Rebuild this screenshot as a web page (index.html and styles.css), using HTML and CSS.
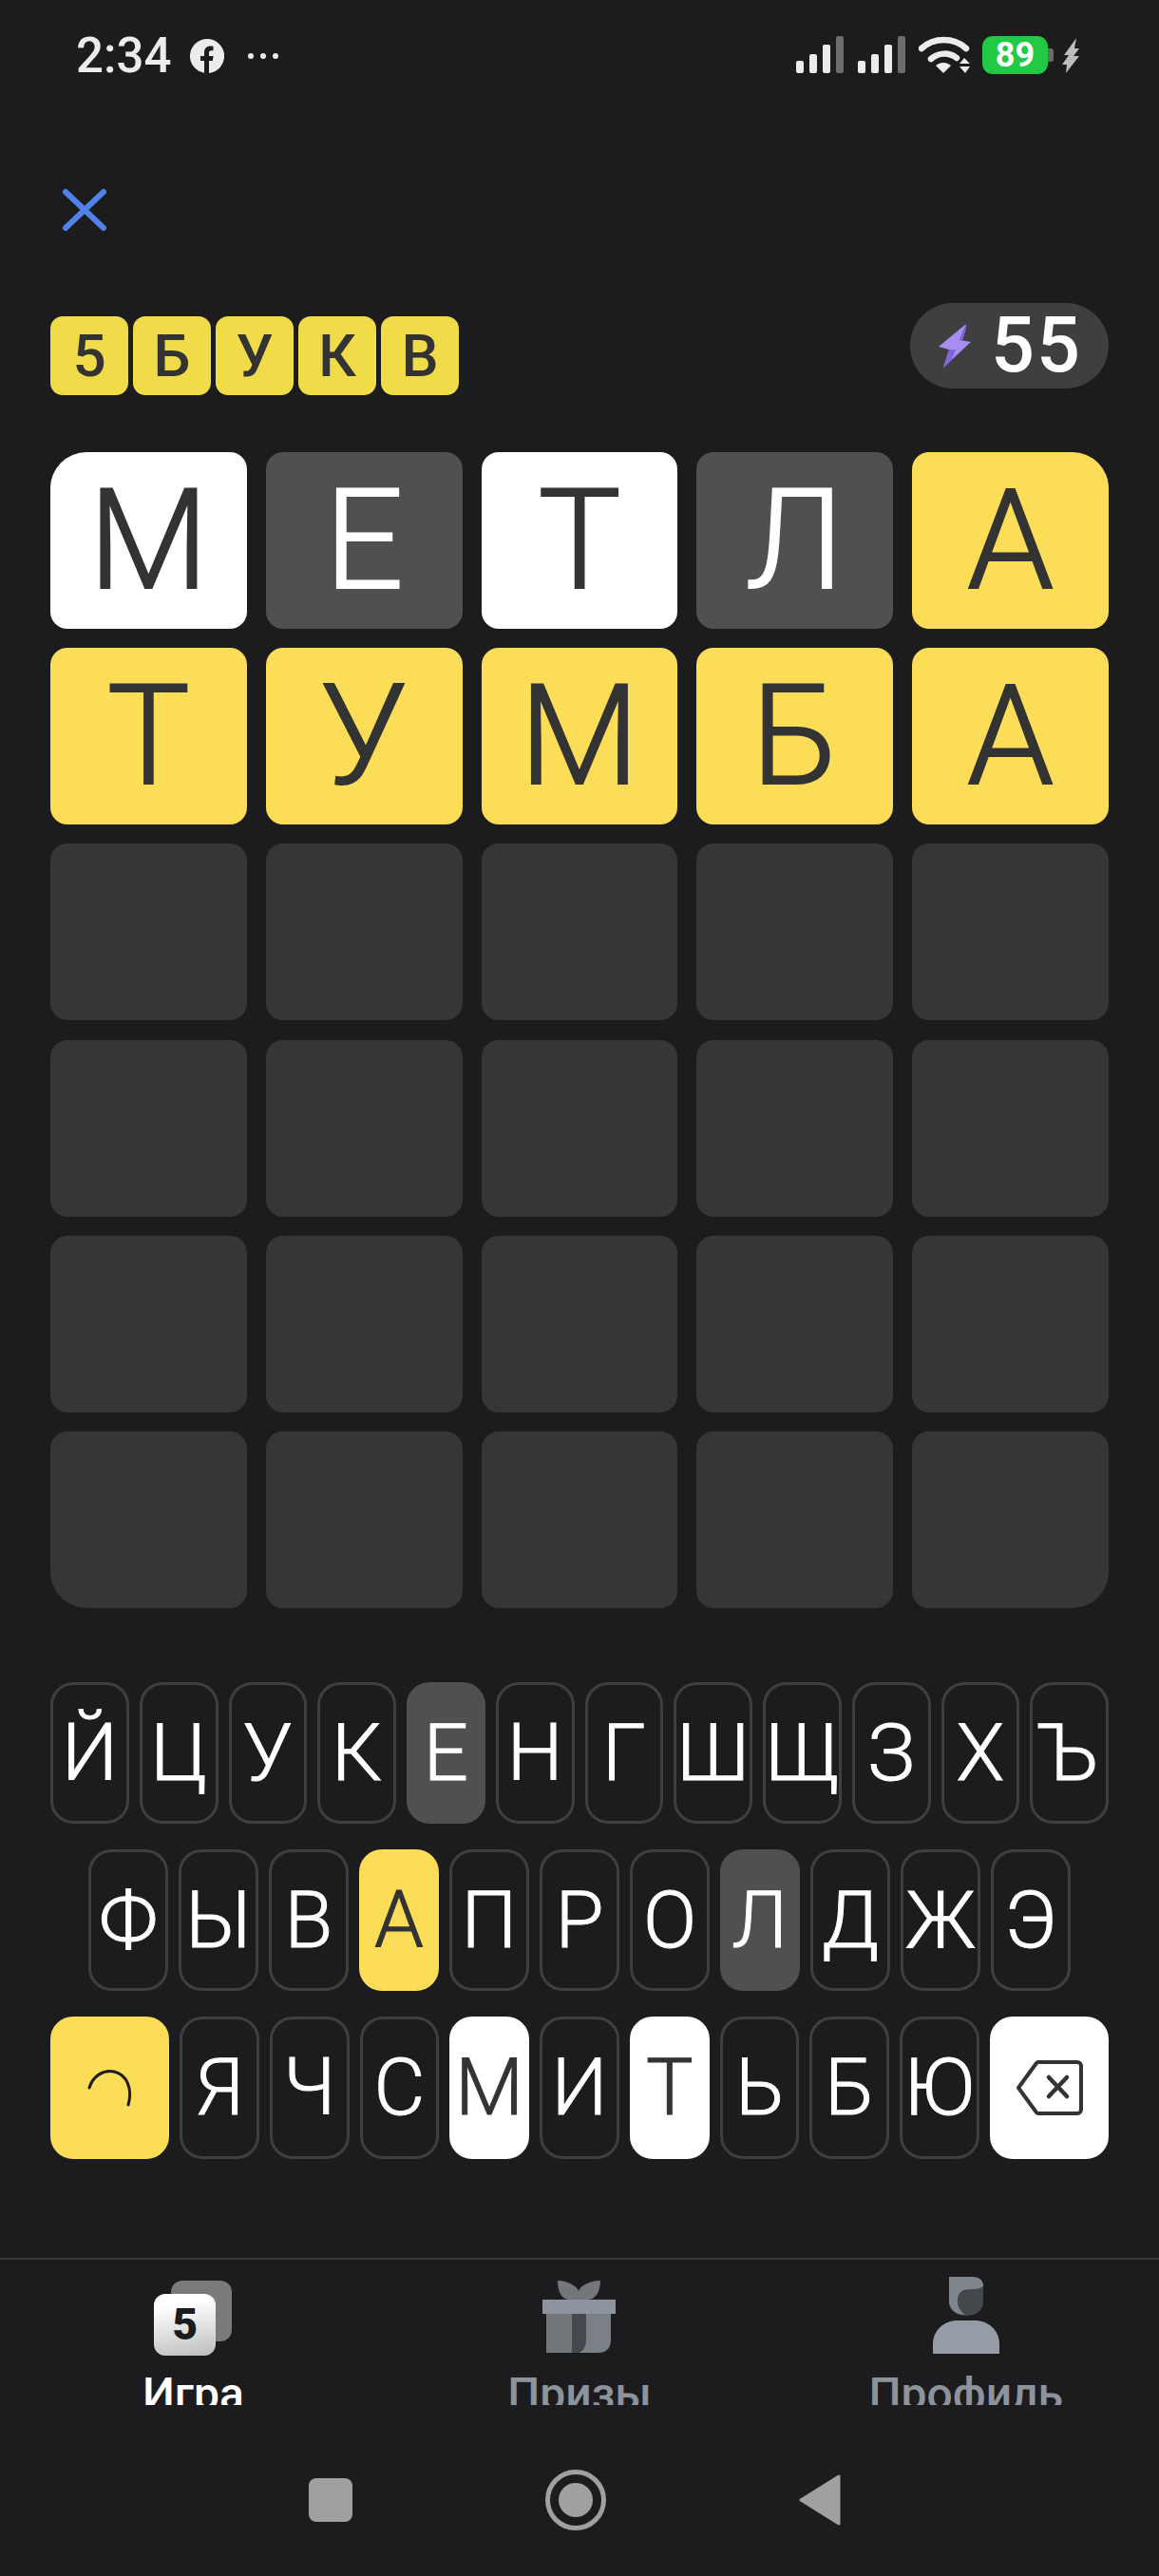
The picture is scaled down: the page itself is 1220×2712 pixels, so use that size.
FILE: index.html
```html
<!DOCTYPE html>
<html lang="ru">
<head>
  <meta charset="UTF-8" />
  <meta name="viewport" content="width=device-width, initial-scale=1.0" />
  <title>5 букв</title>
  <link rel="stylesheet" href="styles.css">
</head>
<body>
  <div class="status-bar">
    <div class="status-left">
      <span class="time">2:34</span>
      <svg class="fb-icon" width="36" height="36" viewBox="0 0 36 36">
        <path fill="#ececec" d="M18 0a18 18 0 0 0-3 35.750V23h-4v-5h4v-3.600C15 10 17.600 7.600 21.500 7.600c1.500 0 3 .3 3 .3v4.300h-2c-2 0-2.500 1.200-2.500 2.500V18h4.600l-.8 5H20v12.900A18 18 0 0 0 18 0z"/>
      </svg>
      <svg class="dots" width="34" height="8" viewBox="0 0 34 8">
        <circle cx="4" cy="4" r="3" fill="#ececec"/>
        <circle cx="17" cy="4" r="3" fill="#ececec"/>
        <circle cx="30" cy="4" r="3" fill="#ececec"/>
      </svg>
    </div>
    <div class="status-right">
      <svg width="50" height="40" viewBox="0 0 50 40">
        <rect x="0" y="26" width="8" height="13" rx="2" fill="#ececec"/>
        <rect x="14" y="19" width="8" height="20" rx="2" fill="#ececec"/>
        <rect x="28" y="9" width="8" height="30" rx="2" fill="#ececec"/>
        <rect x="42" y="0" width="8" height="39" rx="2" fill="#6c6c6c"/>
      </svg>
      <svg class="signal-two" width="50" height="40" viewBox="0 0 50 40">
        <rect x="0" y="26" width="8" height="13" rx="2" fill="#ececec"/>
        <rect x="14" y="19" width="8" height="20" rx="2" fill="#ececec"/>
        <rect x="28" y="9" width="8" height="30" rx="2" fill="#ececec"/>
        <rect x="42" y="0" width="8" height="39" rx="2" fill="#6c6c6c"/>
      </svg>
      <svg class="wifi" width="54" height="40" viewBox="0 0 54 40">
        <path d="M3 13C16 1 37 1 50 13" fill="none" stroke="#ececec" stroke-width="6.500" stroke-linecap="round"/>
        <path d="M13 24c8-7 19-7 27-1" fill="none" stroke="#ececec" stroke-width="6.500" stroke-linecap="round"/>
        <path d="M18 31c5-4 11-4 16 0l-8 8z" fill="#ececec"/>
        <path d="M48 23l6 6H43zM43 32h11l-5 7z" fill="#ececec"/>
      </svg>
      <div class="battery"><span class="battery-level">89</span><span class="battery-nub"></span></div>
      <svg class="charge" width="18" height="37" viewBox="0 0 18 37">
        <path fill="#bdbdbd" d="M15 0L2 18h5L0 28h5l-1 9L18 19h-6l6-8h-5z"/>
      </svg>
    </div>
  </div>

  <svg class="close-icon" width="46" height="44" viewBox="0 0 46 44">
    <path d="M3 3l40 38M43 3L3 41" stroke="#4f83ea" stroke-width="6" stroke-linecap="round"/>
  </svg>

  <div class="top-row">
    <div class="logo">
      <span>5</span><span>Б</span><span>У</span><span>К</span><span>В</span>
    </div>
    <div class="energy">
      <svg width="36" height="46" viewBox="0 0 36 46">
        <path d="M30 0L1 24l11 3L6 46l29-27-12-2z" fill="#a78ff2"/>
        <path d="M30 0l-7 17 3 .5L30 5zM12 27L6 46l8-7 5-12z" fill="#7f66dc"/>
      </svg>
      <span>55</span>
    </div>
  </div>

  <div class="board">
    <div class="cell white corner-tl">М</div>
    <div class="cell gray">Е</div>
    <div class="cell white">Т</div>
    <div class="cell gray">Л</div>
    <div class="cell yellow corner-tr">А</div>
    <div class="cell yellow">Т</div>
    <div class="cell yellow">У</div>
    <div class="cell yellow">М</div>
    <div class="cell yellow">Б</div>
    <div class="cell yellow">А</div>
    <div class="cell"></div><div class="cell"></div><div class="cell"></div><div class="cell"></div><div class="cell"></div>
    <div class="cell"></div><div class="cell"></div><div class="cell"></div><div class="cell"></div><div class="cell"></div>
    <div class="cell"></div><div class="cell"></div><div class="cell"></div><div class="cell"></div><div class="cell"></div>
    <div class="cell corner-bl"></div><div class="cell"></div><div class="cell"></div><div class="cell"></div><div class="cell corner-br"></div>
  </div>

  <div class="keyboard">
    <div class="key-row row-top">
      <button class="key">Й</button>
      <button class="key">Ц</button>
      <button class="key">У</button>
      <button class="key">К</button>
      <button class="key k-gray">Е</button>
      <button class="key">Н</button>
      <button class="key">Г</button>
      <button class="key">Ш</button>
      <button class="key">Щ</button>
      <button class="key">З</button>
      <button class="key">Х</button>
      <button class="key">Ъ</button>
    </div>
    <div class="key-row row-mid">
      <button class="key">Ф</button>
      <button class="key">Ы</button>
      <button class="key">В</button>
      <button class="key k-yellow">А</button>
      <button class="key">П</button>
      <button class="key">Р</button>
      <button class="key">О</button>
      <button class="key k-gray">Л</button>
      <button class="key">Д</button>
      <button class="key">Ж</button>
      <button class="key">Э</button>
    </div>
    <div class="key-row row-bottom">
      <button class="key key-wide k-yellow">
        <svg width="48" height="40" viewBox="0 0 48 40">
          <path d="M2 20C6 7 17 1 28 3c13 3 20 17 15 35" fill="none" stroke="#1c1c1e" stroke-width="3" stroke-linecap="round"/>
        </svg>
      </button>
      <button class="key">Я</button>
      <button class="key">Ч</button>
      <button class="key">С</button>
      <button class="key k-white">М</button>
      <button class="key">И</button>
      <button class="key k-white">Т</button>
      <button class="key">Ь</button>
      <button class="key">Б</button>
      <button class="key">Ю</button>
      <button class="key key-wide k-white">
        <svg width="70" height="58" viewBox="0 0 70 58">
          <path d="M2 29L21 3a3 3 0 0 1 2-1h41a4 4 0 0 1 4 4v46a4 4 0 0 1-4 4H23a3 3 0 0 1-2-1z" fill="none" stroke="#333" stroke-width="4" stroke-linejoin="round"/>
          <path d="M34 18l19 20M53 18L34 38" stroke="#333" stroke-width="4.500" stroke-linecap="round"/>
        </svg>
      </button>
    </div>
  </div>

  <div class="tabs">
    <div class="tab active">
      <div class="tab-icon game-icon">
        <span class="game-back"></span>
        <span class="game-front">5</span>
      </div>
      <div class="tab-label"><span>Игра</span></div>
    </div>
    <div class="tab">
      <div class="tab-icon">
        <svg width="78" height="78" viewBox="0 0 78 78">
          <path d="M16 1C28 1 37 8 38 12 39 8 48 1 61 1 61 12 56 21 48 21H28C20 21 16 12 16 1z" fill="#73777c"/>
          <rect x="0" y="21" width="77" height="15" fill="#8d949d"/>
          <path d="M4 36h27v41H4z" fill="#73777c"/>
          <path d="M31 36h15v26q0 12-8 15h-7z" fill="#45484c"/>
          <path d="M46 36h26v27q0 14-14 14H38q8-3 8-15z" fill="#7b8087"/>
        </svg>
      </div>
      <div class="tab-label"><span>Призы</span></div>
    </div>
    <div class="tab">
      <div class="tab-icon">
        <svg width="70" height="81" viewBox="0 0 70 81">
          <path d="M17 0h24q12 0 12 12v14c0 10-8 15-18 15s-18-5-18-15z" fill="#44474b"/>
          <path d="M17 0h24q12 0 12 10-3 3-12 3c-11 0-15 4-15 12 0 6 2 11 8 15-10 0-17-6-17-15z" fill="#81868c"/>
          <path d="M0 81V71c0-15 12-25 26-25h18c14 0 26 10 26 25v10z" fill="#959ca5"/>
        </svg>
      </div>
      <div class="tab-label"><span>Профиль</span></div>
    </div>
  </div>

  <div class="android-nav">
    <span class="nav-square"></span>
    <svg width="64" height="64" viewBox="0 0 64 64">
      <circle cx="32" cy="32" r="29.500" fill="none" stroke="#a0a0a0" stroke-width="5"/>
      <circle cx="32" cy="32" r="18" fill="#a0a0a0"/>
    </svg>
    <svg width="44" height="54" viewBox="0 0 44 54">
      <path d="M42 2L2 27l40 25z" fill="#a0a0a0" stroke="#a0a0a0" stroke-width="3" stroke-linejoin="round"/>
    </svg>
  </div>
</body>
</html>
```

FILE: styles.css
```css
:root {
  --bg-color: #1c1c1e;
  --empty: #363638;
  --yellow: #fbdd58;
  --gray: #505050;
  --ink: #333333;
  --key-border: #3f3f41;
  --muted: #8d939c;
}

* {
  margin: 0;
  padding: 0;
  box-sizing: border-box;
}

body {
  width: 1220px;
  height: 2712px;
  overflow: hidden;
  background: var(--bg-color);
  color: #fff;
  font-family: 'Roboto', 'Noto Sans', sans-serif;
  display: flex;
  flex-direction: column;
}

/* Status bar */
.status-bar {
  display: flex;
  justify-content: space-between;
  align-items: flex-start;
  height: 199px;
  padding: 38px 84px 0 80px;
}

.status-left {
  display: flex;
  align-items: center;
  height: 42px;
}

.time {
  font-weight: 500;
  font-size: 51px;
  line-height: 42px;
  color: #ececec;
  width: 120px;
}

.dots {
  margin-left: 24px;
}

.status-right {
  display: flex;
  align-items: center;
}

.signal-two {
  margin-left: 15px;
}

.wifi {
  margin-left: 14px;
}

.battery {
  display: flex;
  align-items: center;
  margin-left: 13px;
}

.battery-level {
  width: 69px;
  height: 40px;
  border-radius: 11px;
  background: #22c945;
  color: #fff;
  font-weight: 700;
  font-size: 36px;
  line-height: 40px;
  text-align: center;
}

.battery-nub {
  width: 6px;
  height: 14px;
  background: #6c6c6c;
  border-radius: 0 3px 3px 0;
}

.charge {
  margin-left: 9px;
}

.close-icon {
  margin-left: 66px;
  flex: none;
}

/* Title and energy */
.top-row {
  display: flex;
  justify-content: space-between;
  align-items: flex-start;
  margin: 76px 53px 0;
}

.logo {
  display: flex;
  gap: 5px;
  margin-top: 14px;
}

.logo span {
  width: 82px;
  height: 83px;
  border-radius: 13px;
  background: #f0dc48;
  color: var(--ink);
  font-weight: 500;
  font-size: 62px;
  line-height: 83px;
  text-align: center;
}

.energy {
  display: flex;
  align-items: center;
  gap: 20px;
  height: 90px;
  width: 209px;
  padding-left: 29px;
  border-radius: 45px;
  background: #3f3f41;
}

.energy span {
  font-weight: 500;
  font-size: 81px;
  line-height: 90px;
  letter-spacing: 2px;
}

/* Board */
.board {
  display: grid;
  grid-template-columns: repeat(5, 1fr);
  grid-auto-rows: 186px;
  column-gap: 20px;
  row-gap: 20.200px;
  margin: 60px 53px 0;
}

.cell {
  display: flex;
  align-items: center;
  justify-content: center;
  border-radius: 18px;
  background: var(--empty);
  font-weight: 300;
  -webkit-text-stroke: 2px currentColor;
  font-size: 146px;
  color: var(--ink);
}

.cell.white {
  background: #fff;
}

.cell.gray {
  background: var(--gray);
  color: #fff;
}

.cell.yellow {
  background: var(--yellow);
}

.corner-tl {
  border-top-left-radius: 38px;
}

.corner-tr {
  border-top-right-radius: 38px;
}

.corner-bl {
  border-bottom-left-radius: 38px;
}

.corner-br {
  border-bottom-right-radius: 38px;
}

/* Keyboard */
.keyboard {
  display: flex;
  flex-direction: column;
  gap: 27px;
  margin: 78px 53px 0;
}

.key-row {
  display: flex;
  height: 149px;
}

.row-top {
  gap: 11px;
}

.row-mid {
  gap: 11px;
  padding: 0 40px;
}

.row-bottom {
  gap: 11px;
  height: 150px;
}

.key {
  flex: 1 1 0;
  min-width: 0;
  display: flex;
  align-items: center;
  justify-content: center;
  border: 3px solid var(--key-border);
  border-radius: 24px;
  background: transparent;
  color: #fff;
  font-family: inherit;
  font-weight: 300;
  -webkit-text-stroke: 1px currentColor;
  font-size: 83px;
  white-space: nowrap;
}

.key-wide {
  flex: 0 0 125px;
}

.k-gray {
  background: var(--gray);
  border-color: var(--gray);
}

.k-yellow {
  background: var(--yellow);
  border-color: var(--yellow);
  color: var(--ink);
}

.k-white {
  background: #fff;
  border-color: #fff;
  color: var(--ink);
}

/* Tabs */
.tabs {
  display: flex;
  height: 188px;
  margin-top: 104px;
  border-top: 2px solid #3a3a3c;
}

.tab {
  flex: 1;
  display: flex;
  flex-direction: column;
  align-items: center;
  color: var(--muted);
}

.tab.active {
  color: #fff;
}

.tab-icon {
  display: flex;
  align-items: flex-end;
  justify-content: center;
  height: 99px;
  flex: none;
}

.game-icon {
  position: relative;
  width: 82px;
}

.game-back {
  position: absolute;
  right: 0;
  bottom: 13px;
  width: 64px;
  height: 64px;
  border-radius: 12px;
  background: #7a7a7a;
}

.game-front {
  position: absolute;
  left: 0;
  bottom: -2px;
  width: 65px;
  height: 65px;
  border-radius: 12px;
  background: linear-gradient(170deg, #fff 20%, #bdbdbd);
  color: #1c1c1e;
  font-weight: 900;
  font-size: 46px;
  line-height: 65px;
  text-align: center;
}

/* the labels are cut by the bar in the app too */
.tab-label {
  height: 37px;
  margin-top: 17px;
  overflow: hidden;
}

.tab-label span {
  display: block;
  font-weight: 500;
  font-size: 48px;
  line-height: 52px;
}

/* Android navigation */
.android-nav {
  display: flex;
  align-items: center;
  justify-content: space-between;
  height: 64px;
  margin: 35px 335px 0 325px;
}

.nav-square {
  width: 46px;
  height: 46px;
  border-radius: 8px;
  background: #a0a0a0;
}
```
